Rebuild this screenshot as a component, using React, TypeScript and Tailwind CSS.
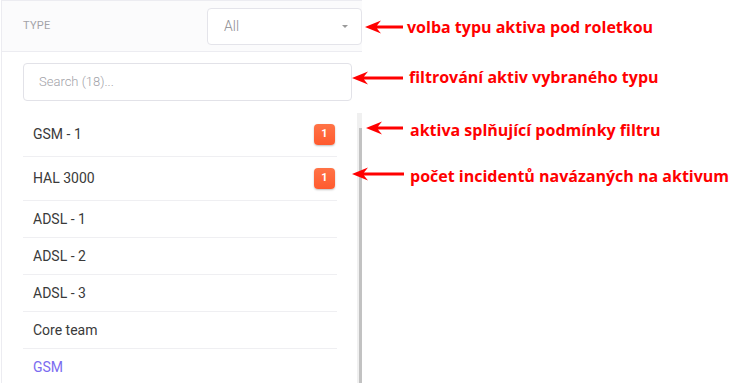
import React from "react";

const ASSETS = [
  { name: "GSM - 1", count: 1 },
  { name: "HAL 3000", count: 1 },
  { name: "ADSL - 1" },
  { name: "ADSL - 2" },
  { name: "ADSL - 3" },
  { name: "Core team" },
  { name: "GSM", type: true },
];

// annotation callouts drawn over the screenshot
const NOTES = [
  { text: "volba typu aktiva pod roletkou", arrow: "top-[20px] left-[365px]", w: 38, label: "top-[16px] left-[407px]" },
  { text: "filtrování aktiv vybraného typu", arrow: "top-[71px] left-[352px]", w: 51, label: "top-[66px] left-[409px]" },
  { text: "aktiva splňující podmínky filtru", arrow: "top-[121px] left-[366px]", w: 37, label: "top-[119px] left-[410px]" },
  { text: "počet incidentů navázaných na aktivum", arrow: "top-[167px] left-[352px]", w: 52, label: "top-[165px] left-[410px]" },
];

function Arrow({ w }: { w: number }) {
  return (
    <svg width={w} height="14" viewBox={`0 0 ${w} 14`}>
      <path d={`M0 7 L16 0.5 L12 5.5 L${w} 5.5 L${w} 8.5 L12 8.5 L16 13.5 Z`} fill="#ff0000" />
    </svg>
  );
}

export default function App() {
  return (
    <div className="relative h-[383px] w-[744px] overflow-hidden bg-white font-['Roboto',sans-serif]">
      <div className="ml-px flex h-full w-[361px] flex-col border-l border-[#ececf1]">
        <div className="flex h-[52px] shrink-0 items-center justify-between border-y border-[#ececf1] bg-[#fbfbfc] pl-[21px]">
          <span className="pt-px text-[11px] tracking-[0.3px] text-[#a3a3a8]">TYPE</span>
          <div className="flex h-[37px] w-[155px] items-center justify-between rounded-[4px] border border-[#e4e4ea] bg-white pl-4 pr-[13px]">
            <span className="text-[14px] font-light text-[#8d8d92]">All</span>
            <span className="h-0 w-0 border-x-[3px] border-t-[3px] border-x-transparent border-t-[#9a9a9a]" />
          </div>
        </div>

        <div className="mt-[11px] ml-[21px] flex h-[38px] w-[329px] shrink-0 items-center rounded-[4px] border border-[#e2e2e8] px-[15px]">
          <span className="text-[13px] font-light text-[#a2a2a8]">Search (18)...</span>
        </div>

        <div className="mt-[12px] flex flex-1">
          <ul className="ml-[21px] w-[315px]">
            {ASSETS.map((a) => (
              <li
                key={a.name}
                className={`flex items-center justify-between border-b border-[#efeff2] pl-[10px] pr-[2px] ${
                  a.count ? "h-[44px]" : "h-[37px]"
                }`}
              >
                <span className={`text-[14px] ${a.type ? "text-[#7b6cf0]" : "text-[#3a3a3a]"}`}>{a.name}</span>
                {a.count && (
                  <span className="flex h-[21px] w-[21px] items-center justify-center rounded-[4px] bg-gradient-to-b from-[#ff7346] to-[#ff5a2e] text-[11px] font-bold text-white shadow-[0_1px_2px_rgba(0,0,0,0.25)]">
                    {a.count}
                  </span>
                )}
              </li>
            ))}
          </ul>
          <div className="ml-[20px] flex w-[5px] flex-col bg-[#f0f0f0]">
            <div className="mt-[15px] ml-[2px] w-[3px] flex-1 bg-[#c2c2c2]" />
          </div>
        </div>
      </div>

      {NOTES.map((n) => (
        <React.Fragment key={n.text}>
          <div className={`absolute ${n.arrow} flex`}>
            <Arrow w={n.w} />
          </div>
          <span
            className={`absolute ${n.label} whitespace-nowrap font-['Open_Sans',sans-serif] text-[16px] leading-[22px] font-bold text-[#ff0000]`}
          >
            {n.text}
          </span>
        </React.Fragment>
      ))}
    </div>
  );
}
